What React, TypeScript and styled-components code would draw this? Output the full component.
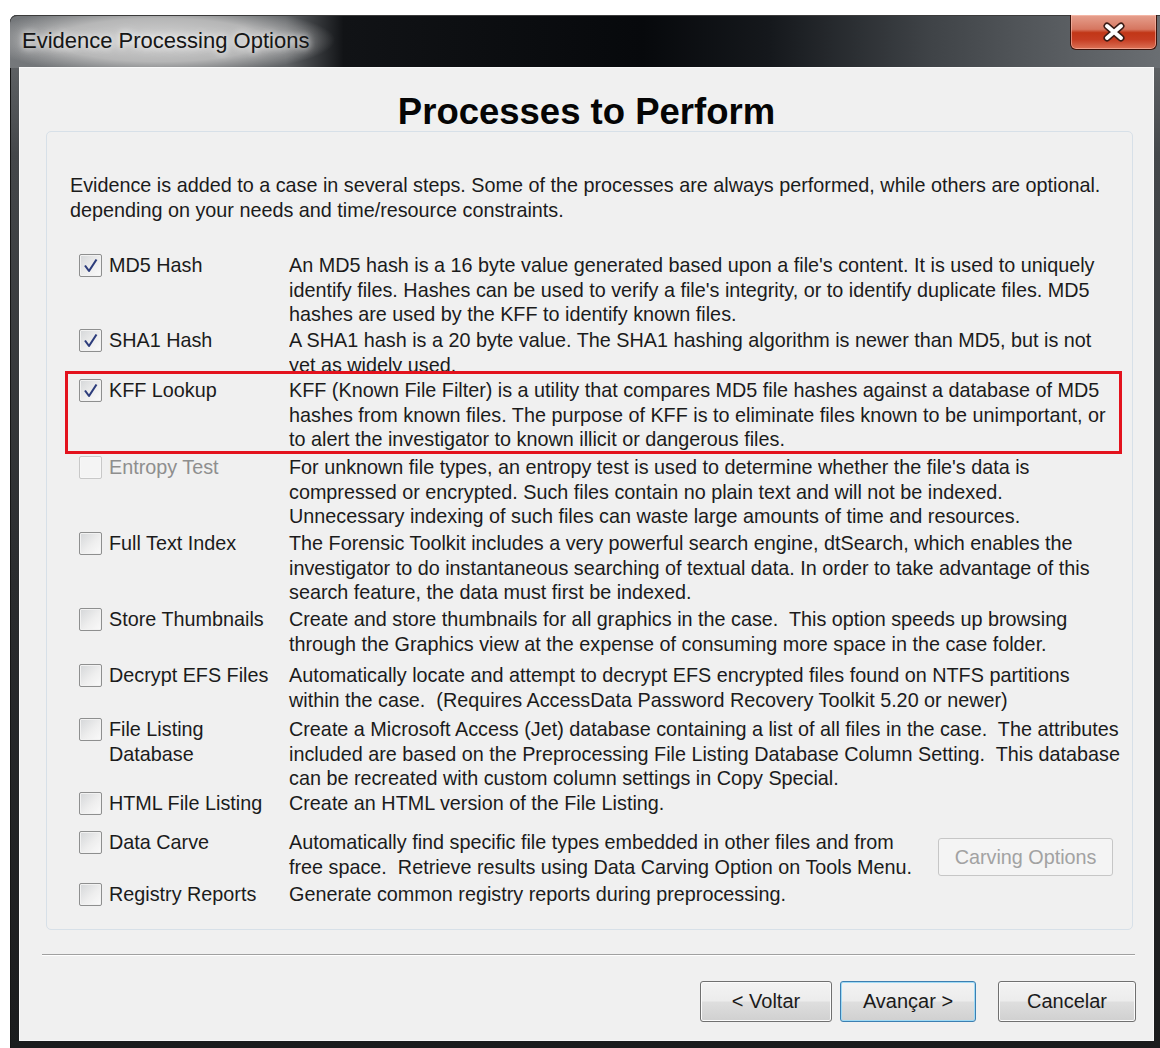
import React from 'react';
import styled, { createGlobalStyle } from 'styled-components';

const GlobalStyle = createGlobalStyle`
  html, body {
    margin: 0;
    background: #ffffff;
  }
  body {
    font-family: 'Liberation Sans', Arial, sans-serif;
  }
`;

const Page = styled.div`
  width: 1160px;
  height: 1048px;
  box-sizing: border-box;
  padding: 15px 0 0 10px;
  overflow: hidden;
`;

const Window = styled.div`
  width: 1150px;
  height: 1033px;
  box-sizing: border-box;
  display: flex;
  flex-direction: column;
  padding-bottom: 8px;
  border-radius: 7px 0 0 0;
  background: linear-gradient(180deg, #6c6f72 0px, #44474a 140px, #2a2c2e 55%, #1b1c1d 100%);
  box-shadow: inset 1px 0 0 #151515, inset 0 1px 0 #2a2a2a;
`;

const TitleBar = styled.div`
  flex: none;
  height: 53px;
  display: flex;
  align-items: flex-start;
  justify-content: space-between;
  padding: 0 3px 0 12px;
  border-radius: 7px 0 0 0;
  background:
    radial-gradient(ellipse 175px 36px at 150px 25px, rgba(214, 214, 214, 0.97) 0%, rgba(190, 190, 190, 0.9) 60%, rgba(150, 150, 150, 0) 100%),
    linear-gradient(90deg, #75787b 0%, #606366 24%, #111316 29%, #07090c 55%, #15181c 66%, #3f4347 80%, #5a5e62 92%, #6a6e72 100%);
  box-shadow: inset 0 1px 0 #3b3b3b;
`;

const TitleText = styled.div`
  margin-top: 13px;
  font-size: 22px;
  line-height: 26px;
  color: #161616;
  text-shadow: 0 0 6px rgba(255, 255, 255, 0.9), 0 0 12px rgba(255, 255, 255, 0.7);
  white-space: nowrap;
`;

const CloseButton = styled.div`
  width: 87px;
  height: 35px;
  box-sizing: border-box;
  display: flex;
  align-items: center;
  justify-content: center;
  border: 1px solid #3a120a;
  border-top: none;
  border-radius: 0 0 6px 6px;
  background: linear-gradient(180deg, #e6a08e 0%, #d67660 42%, #c13617 52%, #c63d22 72%, #dc7256 100%);
  box-shadow: inset 0 0 0 1px rgba(255, 200, 185, 0.55);
`;

const Client = styled.div`
  flex: 1;
  margin: 0 7px 0 10px;
  display: flex;
  flex-direction: column;
  background: #f0f0f0;
  box-shadow: 0 0 0 1px #f9f9f9;
`;

const Heading = styled.h1`
  margin: 24px 0 -1px;
  font-size: 36.5px;
  line-height: 40px;
  font-weight: bold;
  text-align: center;
  color: #050505;
`;

const GroupBox = styled.div`
  height: 799px;
  box-sizing: border-box;
  margin: 0 20px 0 26px;
  padding: 41px 0 0 23px;
  border: 1px solid #d7e0e8;
  border-radius: 5px;
  font-size: 19.8px;
  line-height: 24.5px;
  color: #1b1b1b;
`;

const Intro = styled.div`
  margin-bottom: 31px;
  white-space: pre;
`;

const Rows = styled.div`
  margin-left: 9px;
`;

const Row = styled.div<{ $h: number }>`
  display: grid;
  grid-template-columns: 210px 1fr;
  height: ${(p) => p.$h}px;
  position: relative;
`;

const Option = styled.div<{ $disabled?: boolean }>`
  display: flex;
  align-items: flex-start;
  gap: 7px;
  color: ${(p) => (p.$disabled ? '#8e8e8e' : '#1b1b1b')};
`;

const Box = styled.span<{ $disabled?: boolean }>`
  flex: none;
  width: 23px;
  height: 23px;
  margin-top: 1px;
  box-sizing: border-box;
  display: flex;
  align-items: center;
  justify-content: center;
  border: 1px solid ${(p) => (p.$disabled ? '#c8c8c8' : '#8e8f8f')};
  border-radius: 2px;
  background: ${(p) =>
    p.$disabled ? '#f4f4f4' : 'linear-gradient(135deg, #d4d6d8 0%, #eeeeee 55%, #fafafa 100%)'};
  box-shadow: inset 0 0 0 1px ${(p) => (p.$disabled ? '#f7f7f7' : '#f2f2f2')};
`;

const Desc = styled.div<{ $clip?: number }>`
  display: flex;
  align-items: flex-start;
  gap: 26px;
  ${(p) => (p.$clip ? `max-height: ${p.$clip}px; overflow: hidden;` : '')}
`;

const Lines = styled.div`
  white-space: pre;
`;

const Highlight = styled.div`
  position: absolute;
  top: -7px;
  left: -14px;
  width: 1057px;
  height: 83px;
  box-sizing: border-box;
  border: 3px solid #e3121d;
  pointer-events: none;
`;

const SideButton = styled.div`
  flex: none;
  width: 175px;
  height: 38px;
  margin-top: 8px;
  box-sizing: border-box;
  display: flex;
  align-items: center;
  justify-content: center;
  border: 1px solid #c6c6c6;
  border-radius: 3px;
  background: #f4f4f4;
  color: #a2a2a2;
`;

const Separator = styled.div`
  height: 1px;
  margin: 24px 18px 0 22px;
  background: #a0a0a0;
  border-bottom: 1px solid #ffffff;
`;

const ButtonBar = styled.div`
  display: flex;
  justify-content: flex-end;
  align-items: center;
  margin-top: 25px;
  padding-right: 17px;
`;

const DialogButton = styled.div<{ $w: number; $primary?: boolean; $gap?: number }>`
  width: ${(p) => p.$w}px;
  height: 41px;
  margin-left: ${(p) => p.$gap ?? 0}px;
  box-sizing: border-box;
  display: flex;
  align-items: center;
  justify-content: center;
  font-size: 20px;
  color: #1b1b1b;
  border: 1px solid ${(p) => (p.$primary ? '#3c7fb1' : '#707070')};
  border-radius: 3px;
  background: linear-gradient(180deg, #f3f3f3 0%, #ececec 48%, #dedede 52%, #d0d0d0 100%);
  box-shadow: inset 0 0 0 1px ${(p) => (p.$primary ? '#9fdaf5' : '#fbfbfb')};
`;

function Check() {
  return (
    <svg width="17" height="17" viewBox="0 0 17 17">
      <path d="M3 8.5 L7 14 L14.5 2.5" fill="none" stroke="#2d3d7c" strokeWidth="2.1" strokeLinejoin="round" />
    </svg>
  );
}

function CloseGlyph() {
  return (
    <svg width="26" height="20" viewBox="0 0 26 20">
      <path d="M6 4 L20 16 M20 4 L6 16" stroke="#3b1c16" strokeWidth="7" strokeLinecap="round" />
      <path d="M6 4 L20 16 M20 4 L6 16" stroke="#ffffff" strokeWidth="4" strokeLinecap="round" />
    </svg>
  );
}

type Process = {
  label: string[];
  lines: string[];
  h: number;
  checked?: boolean;
  disabled?: boolean;
  clip?: number;
  highlight?: boolean;
  action?: string;
};

const processes: Process[] = [
  {
    label: ['MD5 Hash'],
    checked: true,
    h: 75,
    lines: [
      "An MD5 hash is a 16 byte value generated based upon a file's content. It is used to uniquely",
      "identify files. Hashes can be used to verify a file's integrity, or to identify duplicate files. MD5",
      'hashes are used by the KFF to identify known files.',
    ],
  },
  {
    label: ['SHA1 Hash'],
    checked: true,
    h: 50,
    clip: 43,
    lines: [
      'A SHA1 hash is a 20 byte value. The SHA1 hashing algorithm is newer than MD5, but is not',
      'yet as widely used.',
    ],
  },
  {
    label: ['KFF Lookup'],
    checked: true,
    highlight: true,
    h: 77,
    lines: [
      'KFF (Known File Filter) is a utility that compares MD5 file hashes against a database of MD5',
      'hashes from known files. The purpose of KFF is to eliminate files known to be unimportant, or',
      'to alert the investigator to known illicit or dangerous files.',
    ],
  },
  {
    label: ['Entropy Test'],
    disabled: true,
    h: 76,
    lines: [
      "For unknown file types, an entropy test is used to determine whether the file's data is",
      'compressed or encrypted. Such files contain no plain text and will not be indexed.',
      'Unnecessary indexing of such files can waste large amounts of time and resources.',
    ],
  },
  {
    label: ['Full Text Index'],
    h: 76,
    lines: [
      'The Forensic Toolkit includes a very powerful search engine, dtSearch, which enables the',
      'investigator to do instantaneous searching of textual data. In order to take advantage of this',
      'search feature, the data must first be indexed.',
    ],
  },
  {
    label: ['Store Thumbnails'],
    h: 56,
    lines: [
      'Create and store thumbnails for all graphics in the case.  This option speeds up browsing',
      'through the Graphics view at the expense of consuming more space in the case folder.',
    ],
  },
  {
    label: ['Decrypt EFS Files'],
    h: 54,
    lines: [
      'Automatically locate and attempt to decrypt EFS encrypted files found on NTFS partitions',
      'within the case.  (Requires AccessData Password Recovery Toolkit 5.20 or newer)',
    ],
  },
  {
    label: ['File Listing', 'Database'],
    h: 74,
    lines: [
      'Create a Microsoft Access (Jet) database containing a list of all files in the case.  The attributes',
      'included are based on the Preprocessing File Listing Database Column Setting.  This database',
      'can be recreated with custom column settings in Copy Special.',
    ],
  },
  {
    label: ['HTML File Listing'],
    h: 39,
    lines: ['Create an HTML version of the File Listing.'],
  },
  {
    label: ['Data Carve'],
    h: 52,
    action: 'Carving Options',
    lines: [
      'Automatically find specific file types embedded in other files and from',
      'free space.  Retrieve results using Data Carving Option on Tools Menu.',
    ],
  },
  {
    label: ['Registry Reports'],
    h: 40,
    lines: ['Generate common registry reports during preprocessing.'],
  },
];

export default function App() {
  return (
    <Page>
      <GlobalStyle />
      <Window>
        <TitleBar>
          <TitleText>Evidence Processing Options</TitleText>
          <CloseButton>
            <CloseGlyph />
          </CloseButton>
        </TitleBar>
        <Client>
          <Heading>Processes to Perform</Heading>
          <GroupBox>
            <Intro>
              {'Evidence is added to a case in several steps. Some of the processes are always performed, while others are optional.\ndepending on your needs and time/resource constraints.'}
            </Intro>
            <Rows>
              {processes.map((p) => (
                <Row key={p.label.join(' ')} $h={p.h}>
                  <Option $disabled={p.disabled}>
                    <Box $disabled={p.disabled}>{p.checked && <Check />}</Box>
                    <Lines>{p.label.join('\n')}</Lines>
                  </Option>
                  <Desc $clip={p.clip}>
                    <Lines>{p.lines.join('\n')}</Lines>
                    {p.action && <SideButton>{p.action}</SideButton>}
                  </Desc>
                  {p.highlight && <Highlight />}
                </Row>
              ))}
            </Rows>
          </GroupBox>
          <Separator />
          <ButtonBar>
            <DialogButton $w={132}>&lt; Voltar</DialogButton>
            <DialogButton $w={136} $gap={8} $primary>
              Avançar &gt;
            </DialogButton>
            <DialogButton $w={138} $gap={22}>
              Cancelar
            </DialogButton>
          </ButtonBar>
        </Client>
      </Window>
    </Page>
  );
}
